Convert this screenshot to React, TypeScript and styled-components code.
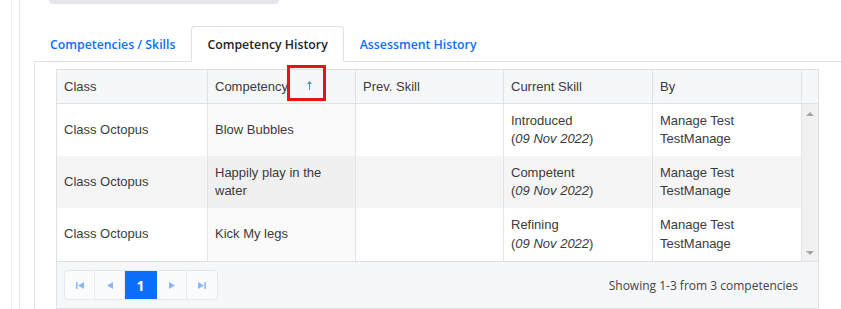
import styled, { createGlobalStyle } from "styled-components";

const GlobalStyle = createGlobalStyle`
  html, body {
    margin: 0;
    padding: 0;
    background: #ffffff;
    overflow: hidden;
  }
`;

const uiFont = `"Open Sans", "Noto Sans", sans-serif`;
const tableFont = `"Liberation Sans", Arial, sans-serif`;

const columns = [
  { key: "class", label: "Class", width: 151 },
  { key: "competency", label: "Competency", width: 148, sorted: true },
  { key: "prev", label: "Prev. Skill", width: 148 },
  { key: "current", label: "Current Skill", width: 149 },
  { key: "by", label: "By", width: 149 },
];

const rows = [
  { cls: "Class Octopus", competency: "Blow Bubbles", skill: "Introduced", date: "09 Nov 2022", by: "Manage Test TestManage" },
  { cls: "Class Octopus", competency: "Happily play in the water", skill: "Competent", date: "09 Nov 2022", by: "Manage Test TestManage" },
  { cls: "Class Octopus", competency: "Kick My legs", skill: "Refining", date: "09 Nov 2022", by: "Manage Test TestManage" },
];

const tabs = ["Competencies / Skills", "Competency History", "Assessment History"];

export default function App() {
  return (
    <>
      <GlobalStyle />
      <Shell>
        <OuterRail>
          <InnerRail>
            <Content>
              <TopBar />
              <TabNav>
                {tabs.map((t, i) => (
                  <Tab key={t} $active={i === 1}>
                    {t}
                  </Tab>
                ))}
              </TabNav>
              <Panel>
                <Table>
                  <HeadRow>
                    {columns.map((c) => (
                      <HeadCell key={c.key} $width={c.width}>
                        {c.label}
                        {c.sorted && (
                          <>
                            <SortIcon width="5" height="9" viewBox="0 0 5 9">
                              <path d="M2.5 0 L5 3 L3 3 L3 9 L2 9 L2 3 L0 3 Z" fill="#4a8cf7" />
                            </SortIcon>
                            <Highlight />
                          </>
                        )}
                      </HeadCell>
                    ))}
                    <HeadSpacer />
                  </HeadRow>
                  <Body>
                    <Rows>
                      {rows.map((r, i) => (
                        <Row key={i} $striped={i % 2 === 1}>
                          <Cell $width={151}>{r.cls}</Cell>
                          <Cell $width={148} $sorted>
                            {r.competency}
                          </Cell>
                          <Cell $width={148} />
                          <Cell $width={149}>
                            <div>
                              {r.skill}
                              <br />(<i>{r.date}</i>)
                            </div>
                          </Cell>
                          <Cell $width={149}>{r.by}</Cell>
                        </Row>
                      ))}
                    </Rows>
                    <ScrollTrack>
                      <ScrollArrow $dir="up" />
                      <ScrollArrow $dir="down" />
                    </ScrollTrack>
                  </Body>
                  <Footer>
                    <Pager>
                      <PageButton>
                        <svg width="8" height="7" viewBox="0 0 8 7">
                          <rect x="0" y="0" width="1.6" height="7" fill="#8db6f7" />
                          <path d="M8 0 L8 7 L2 3.5 Z" fill="#8db6f7" />
                        </svg>
                      </PageButton>
                      <PageButton>
                        <svg width="6" height="7" viewBox="0 0 6 7">
                          <path d="M6 0 L6 7 L0 3.5 Z" fill="#8db6f7" />
                        </svg>
                      </PageButton>
                      <PageButton $active>1</PageButton>
                      <PageButton>
                        <svg width="6" height="7" viewBox="0 0 6 7">
                          <path d="M0 0 L0 7 L6 3.5 Z" fill="#8db6f7" />
                        </svg>
                      </PageButton>
                      <PageButton>
                        <svg width="8" height="7" viewBox="0 0 8 7">
                          <path d="M0 0 L0 7 L6 3.5 Z" fill="#8db6f7" />
                          <rect x="6.4" y="0" width="1.6" height="7" fill="#8db6f7" />
                        </svg>
                      </PageButton>
                    </Pager>
                    <Summary>Showing 1-3 from 3 competencies</Summary>
                  </Footer>
                </Table>
              </Panel>
            </Content>
          </InnerRail>
        </OuterRail>
      </Shell>
    </>
  );
}

const Shell = styled.div`
  height: 309px;
  padding-left: 11px;
  box-sizing: border-box;
`;

const OuterRail = styled.div`
  height: 100%;
  border-left: 1px solid #eceef1;
  padding-left: 7px;
`;

const InnerRail = styled.div`
  height: 100%;
  border-left: 1px solid #e6e8ec;
  padding-left: 14px;
`;

const Content = styled.div`
  display: flex;
  flex-direction: column;
  height: 100%;
`;

const TopBar = styled.div`
  margin-left: 15px;
  width: 230px;
  height: 4px;
  background: #e4e6e9;
  border-radius: 0 0 5px 5px;
`;

const TabNav = styled.div`
  display: flex;
  margin-top: 22px;
  border-bottom: 1px solid #dee2e6;
  margin-right: -30px;
`;

const Tab = styled.div<{ $active?: boolean }>`
  display: flex;
  align-items: center;
  height: 36px;
  padding: 0 15px;
  margin-bottom: -1px;
  font-family: ${uiFont};
  font-size: 12.3px;
  font-weight: 600;
  color: ${({ $active }) => ($active ? "#212529" : "#0d6efd")};
  background: ${({ $active }) => ($active ? "#ffffff" : "transparent")};
  border: 1px solid ${({ $active }) => ($active ? "#dee2e6" : "transparent")};
  border-bottom-color: ${({ $active }) => ($active ? "#ffffff" : "transparent")};
  border-radius: 4px 4px 0 0;
  box-sizing: border-box;
`;

const Panel = styled.div`
  flex: 1;
  border-left: 1px solid #dee2e6;
  padding: 7px 0 0 21px;
`;

const Table = styled.div`
  width: 763px;
  border: 1px solid #dee2e6;
  box-sizing: border-box;
  font-family: ${tableFont};
  font-size: 13px;
  color: #3b3b3b;
`;

const HeadRow = styled.div`
  display: flex;
  height: 34px;
  background: #f6f7f9;
  border-bottom: 1px solid #dee2e6;
  box-sizing: border-box;
`;

const HeadCell = styled.div<{ $width: number }>`
  position: relative;
  display: flex;
  align-items: center;
  width: ${({ $width }) => $width}px;
  padding: 0 7px;
  box-sizing: border-box;
  border-right: 1px solid #dee2e6;
`;

const HeadSpacer = styled.div`
  flex: 1;
`;

const SortIcon = styled.svg`
  position: absolute;
  left: 99px;
  top: 11px;
`;

const Highlight = styled.div`
  position: absolute;
  left: 79px;
  top: -5px;
  width: 39px;
  height: 36px;
  border: 3px solid #e8121a;
  box-sizing: border-box;
`;

const Body = styled.div`
  display: flex;
`;

const Rows = styled.div`
  display: flex;
  flex-direction: column;
`;

const Row = styled.div<{ $striped?: boolean }>`
  display: flex;
  height: 52px;
  background: ${({ $striped }) => ($striped ? "#f5f5f5" : "#ffffff")};

  &:last-child {
    height: 53px;
  }
`;

const Cell = styled.div<{ $width: number; $sorted?: boolean }>`
  display: flex;
  align-items: center;
  width: ${({ $width }) => $width}px;
  padding: 0 7px;
  box-sizing: border-box;
  line-height: 18.5px;
  border-right: 1px solid #e3e4e8;
  background: ${({ $sorted }) => ($sorted ? "rgba(0, 0, 0, 0.02)" : "transparent")};

  i {
    font-style: italic;
  }
`;

const ScrollTrack = styled.div`
  flex: 1;
  display: flex;
  flex-direction: column;
  justify-content: space-between;
  align-items: center;
  padding: 8px 0 6px;
  background: #f1f1f1;
`;

const ScrollArrow = styled.div<{ $dir: "up" | "down" }>`
  width: 0;
  height: 0;
  border-left: 4px solid transparent;
  border-right: 4px solid transparent;
  ${({ $dir }) =>
    $dir === "up"
      ? "border-bottom: 4px solid #a3a3a3;"
      : "border-top: 4px solid #a3a3a3;"}
`;

const Footer = styled.div`
  display: flex;
  align-items: center;
  justify-content: space-between;
  height: 47px;
  padding: 0 20px 0 7px;
  background: #f6f7f9;
  border-top: 1px solid #dee2e6;
  box-sizing: border-box;
`;

const Pager = styled.div`
  display: flex;
  border: 1px solid #e6e8eb;
  border-radius: 4px;
  overflow: hidden;
  background: #fafbfc;
`;

const PageButton = styled.div<{ $active?: boolean }>`
  display: flex;
  align-items: center;
  justify-content: center;
  width: ${({ $active }) => ($active ? 32 : 30)}px;
  height: 30px;
  margin: -1px 0;
  box-sizing: border-box;
  border-right: 1px solid ${({ $active }) => ($active ? "#0d6efd" : "#e6e8eb")};
  font-family: ${uiFont};
  font-size: 14px;
  font-weight: 700;
  color: #ffffff;
  background: ${({ $active }) => ($active ? "#0d6efd" : "transparent")};

  &:last-child {
    border-right: none;
  }
`;

const Summary = styled.div`
  font-family: ${uiFont};
  font-size: 12px;
  color: #444444;
`;
